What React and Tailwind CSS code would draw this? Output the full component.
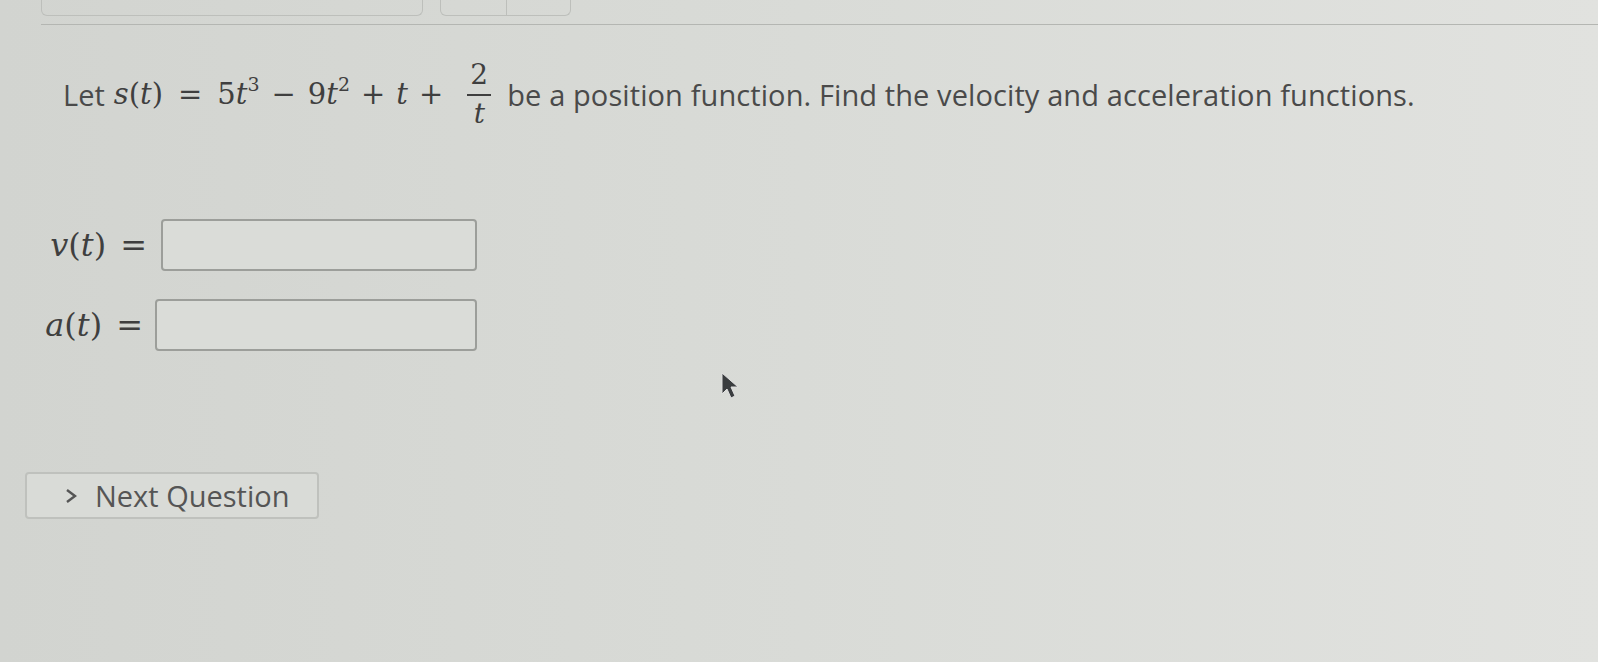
import React from 'react';

const M = ({ children, className = '' }) => (
  <span className={`font-['DejaVu_Serif',serif] italic ${className}`}>{children}</span>
);
const Op = ({ children, className = '' }) => (
  <span className={`font-['DejaVu_Serif',serif] ${className}`}>{children}</span>
);

const App = () => {
  return (
    <div className="relative w-[1598px] h-[662px] overflow-hidden bg-gradient-to-r from-[#d2d4d0] via-[#d9dbd7] to-[#e1e2df] text-[#4a4a4a] font-['Open_Sans',sans-serif]">
      {/* top tabs */}
      <div className="flex pl-[41px] gap-[17px] h-[16px]">
        <div className="w-[382px] border border-t-0 border-[#bdbfbb] rounded-b-[6px]" />
        <div className="flex w-[131px] border border-t-0 border-[#bdbfbb] rounded-b-[6px]">
          <div className="w-[66px] border-r border-[#bdbfbb]" />
        </div>
      </div>
      <div className="ml-[41px] mt-[8px] border-t border-[#b4b6b2]" />

      {/* question */}
      <div className="flex items-center pl-[63px] mt-[36px] text-[29px] leading-none text-[#4a4a4a]">
        <span>Let</span>
        <span className="flex items-center text-[29px] text-[#3f3f3f]">
          <M className="ml-[9px]">s</M>
          <Op>(</Op>
          <M>t</M>
          <Op>)</Op>
          <Op className="mx-[15px]">=</Op>
          <Op>5</Op>
          <M>t</M>
          <Op className="text-[19px] -translate-y-[10px]">3</Op>
          <Op className="mx-[12px]">−</Op>
          <Op>9</Op>
          <M>t</M>
          <Op className="text-[19px] -translate-y-[10px]">2</Op>
          <Op className="mx-[11px]">+</Op>
          <M>t</M>
          <Op className="ml-[11px] mr-[21px]">+</Op>
          <span className="flex flex-col items-center px-[3px] text-[28px]">
            <Op className="pb-[5px]">2</Op>
            <span className="w-[24px] border-t-2 border-[#3f3f3f]" />
            <M className="pt-[4px]">t</M>
          </span>
        </span>
        <span className="ml-[13px] tracking-[0.1px]">be a position function. Find the velocity and acceleration functions.</span>
      </div>

      {/* answers */}
      <div className="mt-[91px] flex flex-col gap-[28px]">
        <div className="flex items-center">
          <div className="w-[161px] flex items-center justify-end pr-[14px] text-[32px] text-[#3f3f3f]">
            <M>v</M><Op>(</Op><M>t</M><Op>)</Op><Op className="ml-[14px]">=</Op>
          </div>
          <div className="w-[316px] h-[52px] border-2 border-[#9c9e9a] rounded-[4px] bg-[#dadcd8]" />
        </div>
        <div className="flex items-center">
          <div className="w-[155px] flex items-center justify-end pr-[12px] text-[32px] text-[#3f3f3f]">
            <M>a</M><Op>(</Op><M>t</M><Op>)</Op><Op className="ml-[14px]">=</Op>
          </div>
          <div className="w-[322px] h-[52px] border-2 border-[#9c9e9a] rounded-[4px] bg-[#dadcd8]" />
        </div>
      </div>

      {/* next question */}
      <div className="pl-[25px] mt-[121px]">
        <button className="flex items-center w-[294px] h-[47px] border-2 border-[#bfc1bd] rounded-[4px] bg-[#d9dbd7] pl-[37px] text-[29px] text-[#555]">
          <svg width="14" height="18" viewBox="0 0 14 18" className="mr-[17px]">
            <path d="M3 3 L11 9 L3 15" fill="none" stroke="#555" strokeWidth="2.4" />
          </svg>
          Next Question
        </button>
      </div>

      {/* mouse cursor */}
      <svg className="absolute left-[721px] top-[372px]" width="22" height="30" viewBox="0 0 22 30">
        <path d="M1 1 L1 22 L6 17 L10 26 L14 24 L10 15 L17 15 Z" fill="#3a3d3f" stroke="#e0e0e0" strokeWidth="1" />
      </svg>
    </div>
  );
};

export default App;
